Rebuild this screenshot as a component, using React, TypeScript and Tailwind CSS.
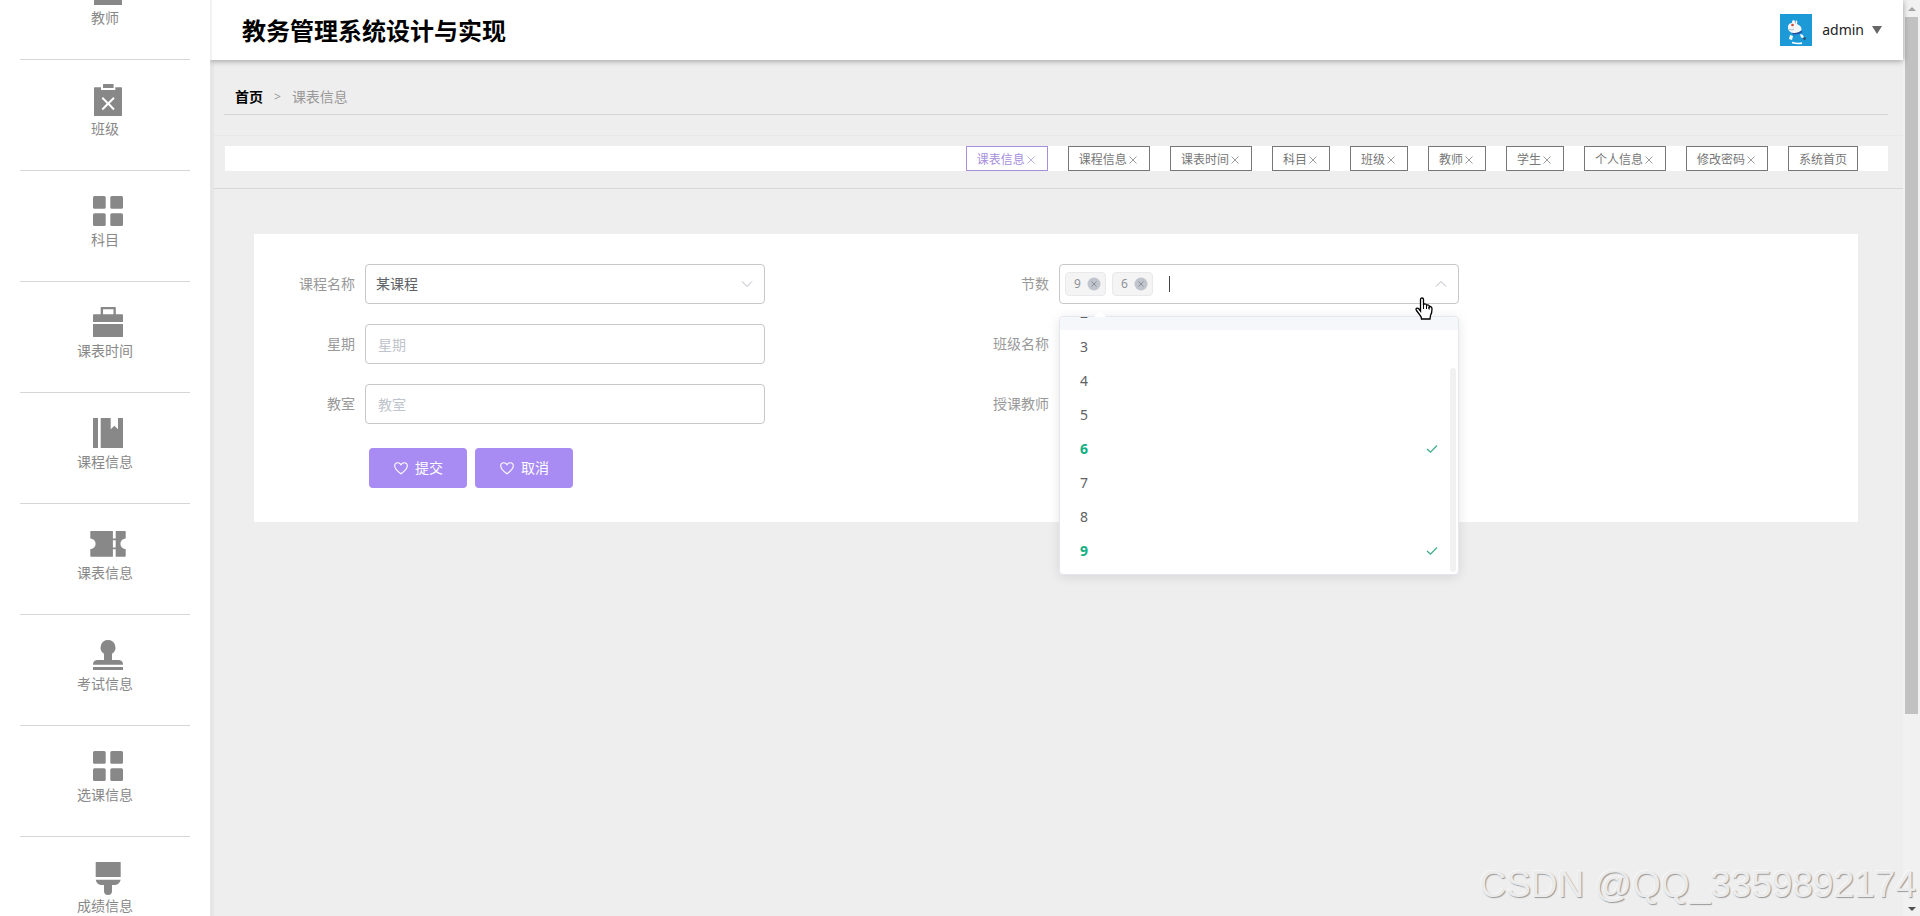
import { useState } from 'react';
import type { ReactNode } from 'react';

const icons: Record<string, ReactNode> = {
  clipboard: (
    <>
      <path d="M13.5 2h9.5q.6 0 .6.6V6H13V2.6Q13 2 13.5 2z" />
      <path
        fillRule="evenodd"
        d="M4.6 5.3H11V8h14.3V5.3h6q.7 0 .7.7v27.4q0 .6-.7.6H4.600q-.6 0-.6-.6V6q0-.7.6-.7zM13 15l-1.400 1.400 5 5.200-5 5.200L13 28.200l5.200-5.200 5.100 5.200 1.400-1.400-5-5.200 5-5.200L23.300 15l-5.100 5.200z"
      />
    </>
  ),
  grid: (
    <>
      <rect x="3" y="3" width="12.700" height="12.700" rx="1.500" />
      <rect x="20.300" y="3" width="12.700" height="12.700" rx="1.500" />
      <rect x="3" y="20.300" width="12.700" height="12.700" rx="1.500" />
      <rect x="20.300" y="20.300" width="12.700" height="12.700" rx="1.500" />
    </>
  ),
  briefcase: (
    <>
      <path
        fillRule="evenodd"
        d="M11.200 3h14q.6 0 .6.600v6.700H32.400q.6 0 .6.700V18H3v-7q0-.7.600-.7h7.100V3.600q0-.6.500-.6zM13 5.200v5.100h10.500V5.200z"
      />
      <path d="M3 20h30v12.400q0 .6-.6.600H3.600q-.6 0-.6-.6z" />
    </>
  ),
  book: (
    <>
      <path d="M3.500 3H8v30H3.500q-.5 0-.5-.6V3.600Q3 3 3.500 3z" />
      <path d="M10.700 3h10v11.300l3.700-3.600 3.600 3.600V3h4.400q.6 0 .6.600v28.800q0 .6-.6.600H10.700z" />
    </>
  ),
  ticket: (
    <path
      fillRule="evenodd"
      d="M.9 5H22.900v7.500h2.800V5h9.400q.6 0 .6.600v6.900a5.300 5.300 0 0 0 0 10.600v7q0 .6-.6.600h-9.400v-7.400h-2.800v7.400H.9q-.6 0-.6-.6v-7a5.300 5.300 0 0 0 0-10.600V5.600Q.3 5 .9 5zM22.900 14.200v7.300h2.800v-7.300z"
    />
  ),
  stamp: (
    <>
      <path d="M18 3a7.500 7.500 0 0 1 4 13.800V23h7q4 .4 4 4.700H3Q3 23.400 7 23h7v-6.200A7.500 7.500 0 0 1 18 3z" />
      <path d="M3 30h30v3H3z" />
    </>
  ),
  brush: (
    <>
      <path d="M6.300 3h23.800q.6 0 .6.600V18H5.700V3.600q0-.6.600-.6z" />
      <path d="M5.700 20.700h25q-1.300 4.700-5.700 5.300h-3v6a4 4 0 0 1-8 0v-6h-3q-4.300-.6-5.300-5.300z" />
    </>
  ),
};

const menu = [
  { label: '教师', icon: 'clipboard' },
  { label: '班级', icon: 'clipboard' },
  { label: '科目', icon: 'grid' },
  { label: '课表时间', icon: 'briefcase' },
  { label: '课程信息', icon: 'book' },
  { label: '课表信息', icon: 'ticket' },
  { label: '考试信息', icon: 'stamp' },
  { label: '选课信息', icon: 'grid' },
  { label: '成绩信息', icon: 'brush' },
];

const tabs = ['课表信息', '课程信息', '课表时间', '科目', '班级', '教师', '学生', '个人信息', '修改密码'];

const options = ['2', '3', '4', '5', '6', '7', '8', '9'];

const inputClass =
  'h-10 w-[400px] rounded border border-[#c8c8c8] bg-white text-sm text-[#606266] outline-none placeholder:text-[#c0c4cc]';

function Sidebar() {
  return (
    <aside className="relative z-10 h-screen w-[210px] shrink-0 overflow-hidden bg-white">
      <nav className="-mt-[51px] px-5">
        {menu.map((item) => (
          <a
            key={item.label}
            href="#"
            className="flex h-[111px] flex-col items-center border-b border-[#d6d6d6] pt-[22px] text-sm text-[#888]"
          >
            <svg viewBox="0 0 36 36" className="ml-1.5 size-9 shrink-0 fill-[#888]" aria-hidden="true">
              {icons[item.icon]}
            </svg>
            <span className="mt-px leading-5">{item.label}</span>
          </a>
        ))}
      </nav>
    </aside>
  );
}

function Avatar() {
  return (
    <svg viewBox="0 0 32 32" className="size-8" aria-hidden="true">
      <rect width="32" height="32" fill="#1c9ad8" />
      <path d="M8 12q1-3 4-3 0-3 1.500-3t1.500 2q.5-2 1.700-1.500T17 10q5 2 4.500 6-2 3-7 3.500Q7 18 8 12z" fill="#f4f6f8" />
      <circle cx="12.500" cy="11" r="1.300" fill="#d8442e" />
      <path d="M15.500 6.500v3M9 15q3 2 5 0" stroke="#7a8fa6" strokeWidth=".6" fill="none" />
      <path d="M12.500 19.500q5 1 9.500-2" stroke="#2a4fa0" strokeWidth="1.600" fill="none" />
      <path d="M10 21l3 1-1 4-3-1zM20 20l3 1 1 3-3-.5z" fill="#fff" />
      <circle cx="24.500" cy="24.500" r="1.300" fill="#2b4257" />
      <path d="M12 28.500q5 1.500 10 .7" stroke="#fff" strokeWidth="1.700" fill="none" />
    </svg>
  );
}

function Header() {
  return (
    <header className="relative flex h-[60px] items-center justify-between border-l-2 border-[#f2f2f2] bg-white pr-[21px] pl-[30px] shadow-[0_1px_6px_rgba(0,0,0,0.35)]">
      <h1 className="mt-0.5 text-2xl font-bold text-black">教务管理系统设计与实现</h1>
      <button type="button" className="flex items-center text-sm text-[#222]">
        <Avatar />
        <span className="ml-2.5">admin</span>
        <svg viewBox="0 0 10 8" className="ml-2 h-2 w-2.5 fill-[#666]" aria-hidden="true">
          <path d="M0 0h10L5 8z" />
        </svg>
      </button>
    </header>
  );
}

function TabBar() {
  return (
    <div className="border-y border-t-[#e8e8e8] border-b-[#d8d8d8] pt-2.5 pr-[15px] pb-[17px] pl-[11px]">
      <div className="flex justify-end gap-5 bg-white pr-[30px]">
        {tabs.map((tab, index) => (
          <button
            key={tab}
            type="button"
            className={`flex h-[25px] items-center border px-2.5 pt-0.5 text-xs ${
              index === 0 ? 'border-[#a78fdb] text-[#a78fdb]' : 'border-[#777] text-[#777]'
            }`}
          >
            {tab}
            <svg viewBox="0 0 12 12" className="size-3 stroke-current opacity-70" aria-hidden="true">
              <path d="M2.500 2.500l7 7M9.500 2.500l-7 7" fill="none" />
            </svg>
          </button>
        ))}
        <button type="button" className="h-[25px] border border-[#777] px-2.5 pt-0.5 text-xs text-[#777]">
          系统首页
        </button>
      </div>
    </div>
  );
}

function Field({ id, label, children }: { id: string; label: string; children: ReactNode }) {
  return (
    <div className="flex h-10 items-center">
      <label htmlFor={id} className="w-20 shrink-0 pr-2.5 text-right text-sm text-[#999]">
        {label}
      </label>
      {children}
    </div>
  );
}

function PeriodSelect() {
  const [selected, setSelected] = useState(['9', '6']);

  const toggle = (value: string) =>
    setSelected((prev) => (prev.includes(value) ? prev.filter((v) => v !== value) : [...prev, value]));

  return (
    <div className="relative w-[400px]">
      <div className="flex h-10 items-center gap-1.5 rounded border border-[#c8c8c8] bg-white pr-[11px] pl-[5px]">
        {selected.map((value) => (
          <span
            key={value}
            className="flex h-6 items-center gap-1.5 rounded border border-[#e9e9eb] bg-[#f4f4f5] pr-1 pl-2 text-xs text-[#909399]"
          >
            {value}
            <button type="button" aria-label={`移除 ${value}`} onClick={() => toggle(value)}>
              <svg viewBox="0 0 14 14" className="size-3.5" aria-hidden="true">
                <circle cx="7" cy="7" r="6.500" fill="#c0c4cc" />
                <path d="M4.500 4.500l5 5M9.500 4.500l-5 5" stroke="#8d9096" fill="none" />
              </svg>
            </button>
          </span>
        ))}
        <span className="ml-2.5 h-4 w-px bg-[#444]" />
        <input id="period" className="h-8 min-w-0 flex-1 bg-transparent text-sm outline-none" />
        <svg viewBox="0 0 12 12" className="size-3 stroke-[#b4b8c0]" aria-hidden="true">
          <path d="M1 8.500l5-5 5 5" fill="none" />
        </svg>
      </div>

      <div className="absolute top-[52px] left-0 z-10 w-full rounded border border-[#e4e7ed] bg-white shadow-[0_2px_12px_rgba(0,0,0,0.1)]">
        <svg viewBox="0 0 12 6" className="absolute -top-1.5 left-[34px] h-1.5 w-3 fill-white" aria-hidden="true">
          <path d="M0 6l6-6 6 6z" />
        </svg>
        <div className="overflow-hidden rounded pb-1.5">
          <ul role="listbox" aria-multiselectable="true" className="-mt-[21px]">
            {options.map((option) => {
              const active = selected.includes(option);

              return (
                <li
                  key={option}
                  role="option"
                  aria-selected={active}
                  onClick={() => toggle(option)}
                  className={`flex h-[34px] cursor-pointer items-center justify-between px-5 text-sm ${
                    active ? 'font-bold text-[#13b084]' : 'text-[#606266]'
                  } ${option === '2' ? 'bg-[#f5f7fa]' : ''}`}
                >
                  {option}
                  {active && (
                    <svg viewBox="0 0 12 12" className="size-3 stroke-[#3fae85]" aria-hidden="true">
                      <path d="M1 6l3.500 3.200L11 2.500" fill="none" strokeWidth="1.300" />
                    </svg>
                  )}
                </li>
              );
            })}
          </ul>
        </div>
        <div className="absolute right-0.5 bottom-0.5 h-[204px] w-1.5 rounded bg-[#f1f1f2]" />
      </div>

      {/* pointer */}
      <svg viewBox="0 0 18 23" className="absolute top-[33px] left-[356px] z-20 h-[23px] w-[18px]" aria-hidden="true">
        <path
          d="M5.500 14V2.500Q5.500 1 7 1t1.500 1.500V8Q9 6.500 10.500 7t1 2Q12 7.500 13.300 8t.9 2q1-1 2.300.2.500.5.500 1.800 0 4-1.500 6.500L15 22H6.500L6 19.500 1.500 13.500Q.5 12 1.500 11.300t2.500.7z"
          fill="#fff"
          stroke="#000"
          strokeWidth="1.300"
        />
        <path d="M8.500 8v4M11.500 9v3M14.200 10v2.500" stroke="#000" fill="none" />
      </svg>
    </div>
  );
}

function SubmitButton({ label, type }: { label: string; type: 'submit' | 'button' }) {
  return (
    <button
      type={type}
      className="flex h-10 w-[98px] items-center justify-center gap-1.5 rounded bg-[#a88cf3] text-sm text-white"
    >
      <svg viewBox="0 0 16 16" className="size-4 stroke-white" fill="none" aria-hidden="true">
        <path
          d="M8 13.800C5 11.500 1.700 9 1.700 5.900 1.700 4 3 2.700 4.800 2.700c1.500 0 2.500.8 3.200 2 .7-1.200 1.700-2 3.200-2 1.800 0 3.100 1.300 3.100 3.200 0 3.100-3.300 5.600-6.300 7.900z"
          strokeWidth="1.100"
        />
      </svg>
      {label}
    </button>
  );
}

function CourseForm() {
  return (
    <form
      className="mt-[45px] mr-[45px] ml-10 bg-white pt-[30px] pr-[185px] pb-[34px] pl-[31px]"
      onSubmit={(e) => e.preventDefault()}
    >
      <div className="grid grid-cols-2 gap-y-5">
        <Field id="course" label="课程名称">
          <div className="relative">
            <select id="course" className={`${inputClass} appearance-none px-2.5`}>
              <option>某课程</option>
            </select>
            <svg
              viewBox="0 0 12 12"
              className="pointer-events-none absolute top-3.5 right-3 size-3 stroke-[#b4b8c0]"
              aria-hidden="true"
            >
              <path d="M1 3.500l5 5 5-5" fill="none" />
            </svg>
          </div>
        </Field>
        <Field id="period" label="节数">
          <PeriodSelect />
        </Field>
        <Field id="weekday" label="星期">
          <input id="weekday" placeholder="星期" className={`${inputClass} px-3`} />
        </Field>
        <Field id="class" label="班级名称">
          <input id="class" className={`${inputClass} px-3`} />
        </Field>
        <Field id="room" label="教室">
          <input id="room" placeholder="教室" className={`${inputClass} px-3`} />
        </Field>
        <Field id="teacher" label="授课教师">
          <input id="teacher" className={`${inputClass} px-3`} />
        </Field>
      </div>
      <div className="mt-6 flex gap-2 pl-[84px]">
        <SubmitButton label="提交" type="submit" />
        <SubmitButton label="取消" type="button" />
      </div>
    </form>
  );
}

function ScrollTrack() {
  return (
    <div className="flex h-screen w-[17px] shrink-0 flex-col items-center bg-[#f1f1f1]" aria-hidden="true">
      <svg viewBox="0 0 17 17" className="size-[17px] shrink-0 fill-[#a3a3a3]">
        <path d="M5 11h8L9 7z" />
      </svg>
      <div className="min-h-0 w-full flex-1 px-0.5">
        <div className="h-[79%] bg-[#c1c1c1]" />
      </div>
      <svg viewBox="0 0 17 17" className="size-[17px] shrink-0 fill-[#505050]">
        <path d="M5 8h8l-4 4z" />
      </svg>
    </div>
  );
}

export default function App() {
  return (
    <div className="relative flex h-screen overflow-hidden bg-[#eee] font-['Noto_Sans','Noto_Sans_CJK_SC',sans-serif]">
      <Sidebar />
      <main className="min-w-0 flex-1">
        <Header />
        <div className="min-h-full border-l-4 border-[#e6e6e6] pt-[22px]">
          <nav className="mr-[15px] ml-2.5 flex h-[33px] gap-[11px] border-b border-[#d6d6d6] pl-[11px] text-sm leading-[30px] text-[#999]">
            <a href="#" className="font-bold text-black">
              首页
            </a>
            <span className="text-xs leading-[30px]">&gt;</span>
            <span>课表信息</span>
          </nav>
          <div className="mt-5">
            <TabBar />
          </div>
          <CourseForm />
        </div>
      </main>
      <ScrollTrack />
      <div className="pointer-events-none absolute right-1 bottom-2.5 z-10 font-['Liberation_Sans',sans-serif] text-[37px] leading-[42px] text-[#ebebeb] [text-shadow:1px_1px_1px_#999,-1px_-1px_0_#f6f6f6]">
        CSDN @QQ_3359892174
      </div>
    </div>
  );
}
